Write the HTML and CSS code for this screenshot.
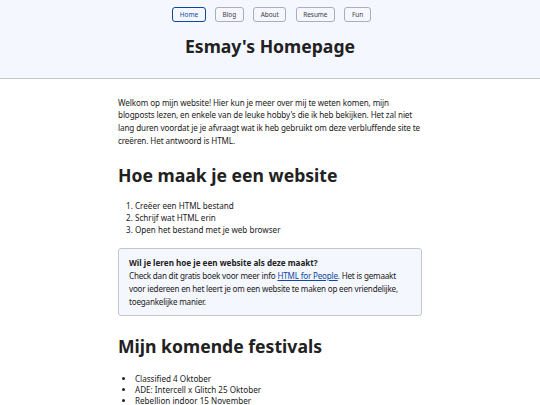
FILE: index.html
```html
<!DOCTYPE html>
<html lang="nl">
<head>
<meta charset="utf-8">
<title>Esmay's Homepage</title>
<link rel="stylesheet" href="styles.css">
</head>
<body>
<header class="site-header">
  <nav class="nav">
    <a class="nav-link current" href="#">Home</a>
    <a class="nav-link" href="#">Blog</a>
    <a class="nav-link" href="#">About</a>
    <a class="nav-link" href="#">Resume</a>
    <a class="nav-link" href="#">Fun</a>
  </nav>
  <h1 class="site-title">Esmay's Homepage</h1>
</header>
<main class="content">
  <p class="intro">Welkom op mijn website! Hier kun je meer over mij te weten komen, mijn<br>
  blogposts lezen, en enkele van de leuke hobby's die ik heb bekijken. Het zal niet<br>
  lang duren voordat je je afvraagt wat ik heb gebruikt om deze verbluffende site te<br>
  creëren. Het antwoord is HTML.</p>
  <h2 class="section-title">Hoe maak je een website</h2>
  <ol class="list">
    <li>Creëer een HTML bestand</li>
    <li>Schrijf wat HTML erin</li>
    <li>Open het bestand met je web browser</li>
  </ol>
  <aside class="notice">
    <strong class="notice-title">Wil je leren hoe je een website als deze maakt?</strong><br>
    Check dan dit gratis boek voor meer info <a class="link" href="#">HTML for People</a>. Het is gemaakt<br>
    voor iedereen en het leert je om een website te maken op een vriendelijke,<br>
    toegankelijke manier.
  </aside>
  <h2 class="section-title second">Mijn komende festivals</h2>
  <ul class="list bullets">
    <li>Classified 4 Oktober</li>
    <li>ADE: Intercell x Glitch 25 Oktober</li>
    <li>Rebellion indoor 15 November</li>
  </ul>
</main>
</body>
</html>
```

FILE: styles.css
```css
html, body {
  margin: 0;
  padding: 0;
  background: #ffffff;
}
body {
  font-family: "Noto Sans", "Open Sans", sans-serif;
  color: #212121;
  font-size: 8.1px;
  line-height: 12.7px;
}
.site-header {
  background: #f5f7ff;
  border-bottom: 1px solid #c4c6cf;
  padding-top: 7px;
  height: 71px;
  text-align: center;
}
.nav {
  display: flex;
  justify-content: center;
  gap: 9.5px;
  padding-left: 3px;
}
.nav-link {
  display: block;
  box-sizing: border-box;
  height: 15px;
  line-height: 13px;
  padding: 0 6.5px;
  border: 1px solid #a9adbd;
  border-radius: 3px;
  font-size: 6.4px;
  color: #3a3a3a;
  text-decoration: none;
}
.nav-link.current {
  border-color: #0d47a1;
  color: #0d47a1;
}
.site-title {
  margin: 12px 0 0;
  font-size: 17.6px;
  line-height: 24px;
  font-weight: 700;
}
.content {
  width: 304px;
  margin: 0 auto;
  padding-top: 17.5px;
}
.intro {
  margin: 0;
  letter-spacing: -0.1px;
  white-space: nowrap;
}
.section-title {
  margin: 16px 0 0;
  font-size: 17.6px;
  line-height: 24px;
  font-weight: 700;
}
.section-title.second {
  margin-top: 18px;
}
.list {
  margin: 13px 0 0;
  padding-left: 17px;
  line-height: 12px;
}
.bullets {
  margin-top: 14.5px;
  line-height: 11px;
}
.notice {
  display: block;
  margin-top: 12px;
  background: #f5f7ff;
  border: 1px solid #c4c6cf;
  border-radius: 3px;
  padding: 7px 10px;
  line-height: 13px;
  letter-spacing: -0.2px;
  white-space: nowrap;
}
.notice-title {
  letter-spacing: 0;
}
.link {
  color: #0d47a1;
}
```
